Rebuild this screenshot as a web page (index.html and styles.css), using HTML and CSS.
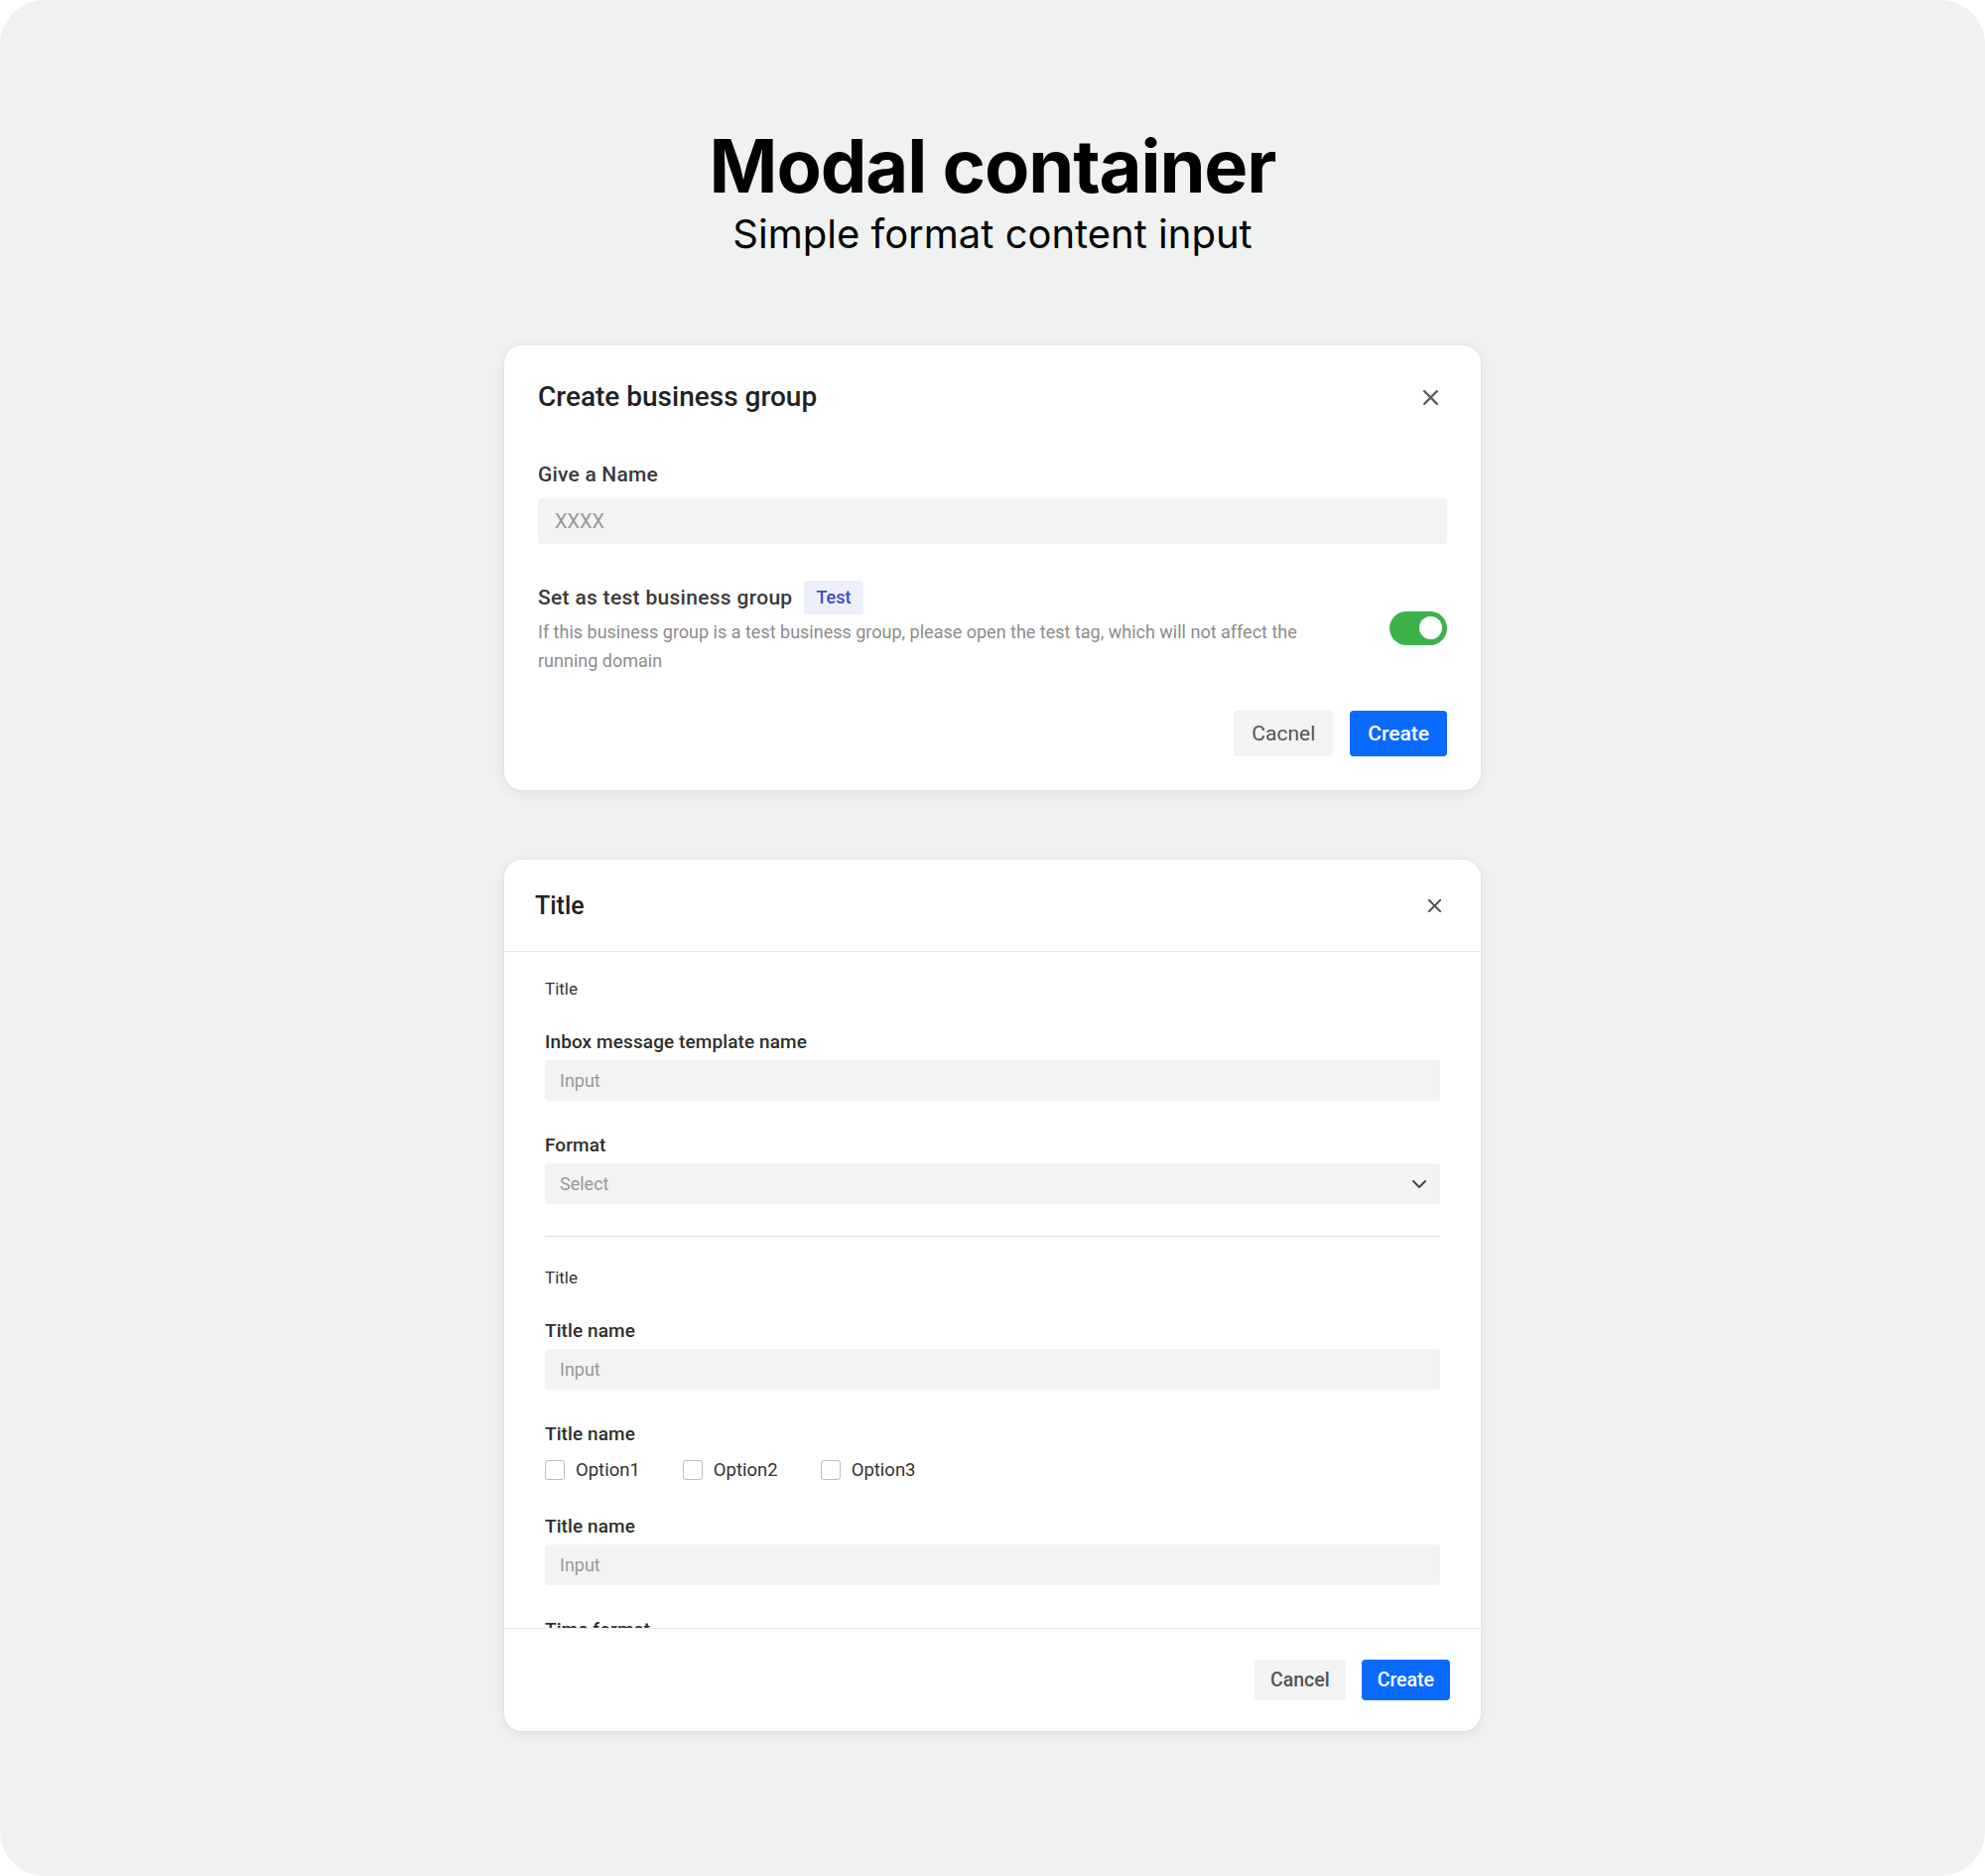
FILE: index.html
```html
<!DOCTYPE html>
<html lang="en">
<head>
<meta charset="utf-8">
<title>Modal container</title>
<link rel="stylesheet" href="styles.css">
</head>
<body>
<main class="canvas">
  <header class="hero">
    <h1 class="hero-title">Modal container</h1>
    <p class="hero-sub">Simple format content input</p>
  </header>

  <section class="modal modal-simple">
    <div class="m1-head">
      <h2 class="m1-title">Create business group</h2>
      <button class="close close-lg" type="button" aria-label="Close">
        <svg viewBox="0 0 16 16" width="17" height="17"><path d="M2 2L14 14M14 2L2 14" stroke="#5c5c5c" stroke-width="2.1" stroke-linecap="round" fill="none"/></svg>
      </button>
    </div>
    <div class="m1-label">Give a Name</div>
    <div class="m1-input">XXXX</div>
    <div class="m1-setting">
      <div class="m1-setting-text">
        <div class="m1-setting-head">
          <span class="m1-setting-label">Set as test business group</span>
          <span class="tag">Test</span>
        </div>
        <p class="m1-desc">If this business group is a test business group, please open the test tag, which will not affect the running domain</p>
      </div>
      <div class="switch"><span class="knob"></span></div>
    </div>
    <div class="m1-actions">
      <button class="btn btn-gray btn-lg" type="button">Cacnel</button>
      <button class="btn btn-primary btn-lg" type="button">Create</button>
    </div>
  </section>

  <section class="modal modal-form">
    <div class="m2-head">
      <h2 class="m2-title">Title</h2>
      <button class="close close-sm" type="button" aria-label="Close">
        <svg viewBox="0 0 16 16" width="15" height="15"><path d="M2 2L14 14M14 2L2 14" stroke="#4a4a4a" stroke-width="2.1" stroke-linecap="round" fill="none"/></svg>
      </button>
    </div>
    <div class="m2-body">
      <div class="sec-title">Title</div>
      <div class="field">
        <div class="field-label">Inbox message template name</div>
        <div class="field-input">Input</div>
      </div>
      <div class="field">
        <div class="field-label">Format</div>
        <div class="field-input field-select">
          <span>Select</span>
          <svg class="chev" viewBox="0 0 16 10" width="16" height="10"><path d="M2 2L8 8L14 2" stroke="#444" stroke-width="2" fill="none" stroke-linecap="round" stroke-linejoin="round"/></svg>
        </div>
      </div>
      <div class="divider"></div>
      <div class="sec-title">Title</div>
      <div class="field">
        <div class="field-label">Title name</div>
        <div class="field-input">Input</div>
      </div>
      <div class="field">
        <div class="field-label">Title name</div>
        <div class="checks">
          <label class="check"><span class="box"></span>Option1</label>
          <label class="check"><span class="box"></span>Option2</label>
          <label class="check"><span class="box"></span>Option3</label>
        </div>
      </div>
      <div class="field">
        <div class="field-label">Title name</div>
        <div class="field-input">Input</div>
      </div>
      <div class="field">
        <div class="field-label">Time format</div>
      </div>
    </div>
    <div class="m2-foot">
      <button class="btn btn-gray btn-sm" type="button">Cancel</button>
      <button class="btn btn-primary btn-sm" type="button">Create</button>
    </div>
  </section>
</main>
</body>
</html>
```

FILE: styles.css
```css
* { box-sizing: border-box; }

html, body {
  margin: 0;
  padding: 0;
  background: #ffffff;
}

.canvas {
  width: 2000px;
  height: 1890px;
  background: #eff2f1;
  border-radius: 45px;
  display: flex;
  flex-direction: column;
  align-items: center;
  padding-top: 123px;
  overflow: hidden;
}

.hero {
  text-align: center;
  font-family: Inter, "Noto Sans", sans-serif;
  color: #000;
}

.hero-title {
  margin: 0;
  font-size: 74px;
  font-weight: 700;
  line-height: 89px;
  letter-spacing: -1.1px;
}

.hero-sub {
  margin: 0;
  font-size: 40px;
  font-weight: 400;
  line-height: 48px;
}

.modal {
  width: 984px;
  background: #fff;
  border-radius: 18px;
  box-shadow: 0 3px 14px rgba(0, 0, 0, 0.08), 0 0 0 1px rgba(0, 0, 0, 0.025);
  font-family: Roboto, "Liberation Sans", Arial, sans-serif;
}

/* ---------- modal 1 ---------- */
.modal-simple {
  margin-top: 88px;
  padding: 34px;
}

.m1-head {
  height: 36px;
  display: flex;
  align-items: center;
  justify-content: space-between;
}

.m1-title {
  margin: 0;
  font-size: 28px;
  font-weight: 500;
  color: #222;
  line-height: 36px;
}

.close {
  border: 0;
  background: transparent;
  padding: 0;
  display: flex;
  align-items: center;
  justify-content: center;
  cursor: pointer;
}

.close-lg { width: 34px; height: 34px; }
.close-sm { width: 32px; height: 32px; }

.m1-label {
  margin-top: 45px;
  font-size: 21px;
  font-weight: 500;
  line-height: 30px;
  color: #3a3a3a;
  letter-spacing: 0.2px;
}

.m1-input {
  margin-top: 9px;
  height: 46px;
  background: #f3f3f3;
  border-radius: 4px;
  padding-left: 17px;
  display: flex;
  align-items: center;
  font-size: 20px;
  color: #9a9a9a;
}

.m1-setting {
  margin-top: 37px;
  display: flex;
  align-items: center;
  gap: 60px;
}

.m1-setting-text { flex: 1; }

.m1-setting-head {
  display: flex;
  align-items: center;
  gap: 12px;
  height: 34px;
}

.m1-setting-label {
  font-size: 21px;
  font-weight: 500;
  color: #3a3a3a;
  letter-spacing: 0.3px;
}

.tag {
  height: 34px;
  line-height: 34px;
  padding: 0 12px;
  border-radius: 4px;
  background: #edeffa;
  color: #3b4cc0;
  font-size: 18px;
  font-weight: 500;
}

.m1-desc {
  margin: 3px 0 0;
  font-size: 18px;
  line-height: 29px;
  color: #8c8c8c;
}

.switch {
  width: 58px;
  height: 34px;
  border-radius: 17px;
  background: #3bb34a;
  display: flex;
  align-items: center;
  justify-content: flex-end;
  padding-right: 5px;
  flex: none;
}

.knob {
  width: 23px;
  height: 23px;
  border-radius: 50%;
  background: #fff;
}

.m1-actions {
  margin-top: 36px;
  display: flex;
  justify-content: flex-end;
  gap: 17px;
}

.btn {
  border: 0;
  border-radius: 4px;
  font-family: Roboto, "Liberation Sans", Arial, sans-serif;
  cursor: pointer;
}

.btn-lg {
  height: 46px;
  padding: 0 18px;
  font-size: 21px;
}

.btn-sm {
  height: 41px;
  padding: 0 16px;
  font-size: 19.5px;
  font-weight: 500;
}

.btn-gray {
  background: #f3f3f3;
  color: #555;
}

.btn-primary {
  background: #0a6aff;
  color: #fff;
  font-weight: 500;
}

/* ---------- modal 2 ---------- */
.modal-form {
  margin-top: 70px;
  display: flex;
  flex-direction: column;
}

.m2-head {
  height: 93px;
  padding: 0 31px;
  display: flex;
  align-items: center;
  justify-content: space-between;
  border-bottom: 1px solid #e9e9e9;
}

.m2-title {
  margin: 0;
  font-size: 25px;
  font-weight: 500;
  color: #1f1f1f;
}

.m2-body {
  height: 681px;
  overflow: hidden;
  padding: 26px 41px 0;
}

.sec-title {
  font-size: 17px;
  line-height: 22px;
  color: #333;
}

.field { margin-top: 33px; }
.sec-title + .field { margin-top: 31px; }

.field-label {
  font-size: 19px;
  font-weight: 500;
  line-height: 24px;
  color: #2e2e2e;
  letter-spacing: 0.1px;
}

.field-input {
  margin-top: 6px;
  height: 41px;
  background: #f3f3f3;
  border-radius: 4px;
  padding: 0 13px 0 15px;
  display: flex;
  align-items: center;
  justify-content: space-between;
  font-size: 18px;
  color: #999;
}

.divider {
  margin-top: 32px;
  height: 1px;
  background: #dcdcdc;
}

.divider + .sec-title { margin-top: 30px; }

.checks {
  margin-top: 12px;
  display: flex;
  align-items: center;
  height: 24px;
}

.check {
  display: flex;
  align-items: center;
  gap: 11px;
  margin-right: 43px;
  font-size: 18.5px;
  color: #333;
}

.box {
  width: 20px;
  height: 20px;
  border: 1px solid #bdbdbd;
  border-radius: 3px;
  background: #fff;
}

.m2-foot {
  border-top: 1px solid #e9e9e9;
  padding: 31px;
  display: flex;
  justify-content: flex-end;
  gap: 16px;
}
```
